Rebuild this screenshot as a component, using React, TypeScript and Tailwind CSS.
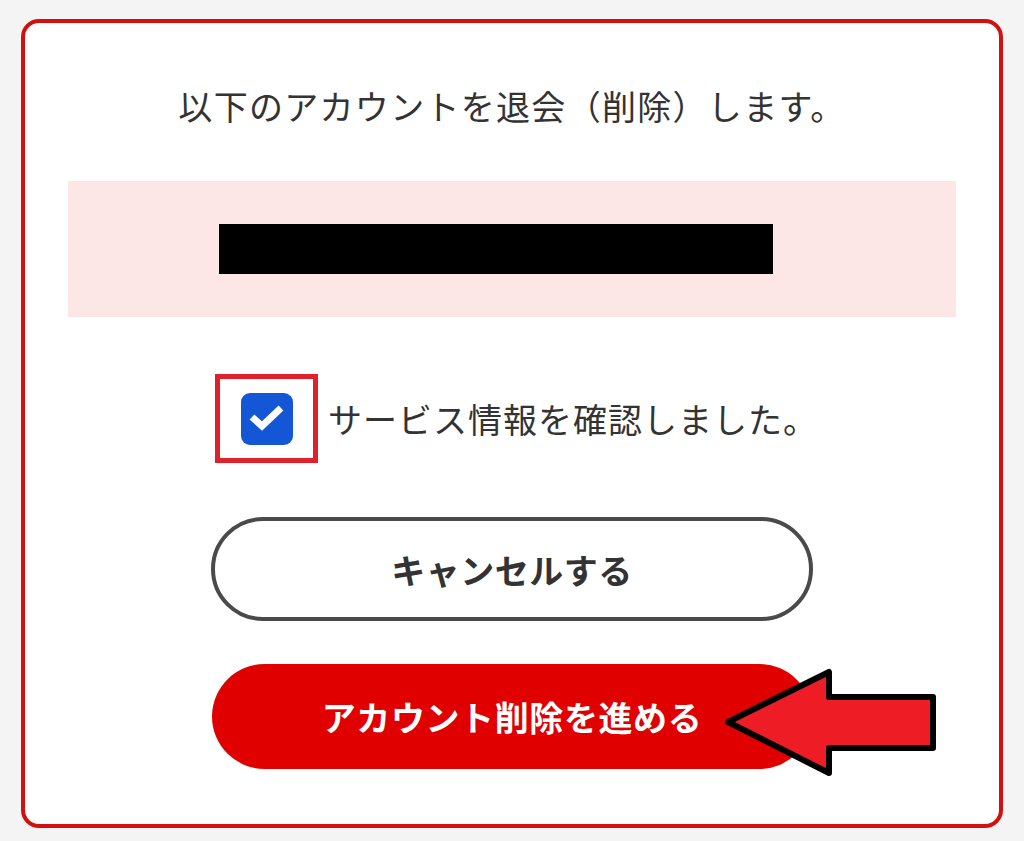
import React from "react";

export default function App() {
  const font = { fontFamily: '"Noto Sans CJK JP", "Noto Sans", sans-serif' };
  return (
    <div className="w-[1024px] h-[841px] bg-[#f4f4f4] pt-[19px] pl-[21px]" style={font}>
      <div className="relative w-[982px] h-[809px] bg-white border-4 border-[#d40f0f] rounded-[18px] flex flex-col items-center pt-[59px]">
        <p className="text-[34px] leading-[48px] text-[#333] tracking-[1.3px]">以下のアカウントを退会（削除）します。</p>
        <div className="mt-[51px] w-[888px] h-[136px] bg-[#fde6e6] flex items-center">
          <div className="ml-[151px] w-[554px] h-[50px] bg-black" />
        </div>
        <div className="mt-[57px] flex items-center gap-[10px] ml-[9px]">
          <div className="w-[103px] h-[89px] border-[5px] border-[#e0212b] flex items-center justify-center">
            <div className="w-[52px] h-[52px] rounded-[9px] bg-[#1457d6] flex items-center justify-center">
              <svg width="52" height="52" viewBox="0 0 52 52">
                <polyline points="11,24 21,33 40,15" fill="none" stroke="white" strokeWidth="7" strokeLinejoin="miter" />
              </svg>
            </div>
          </div>
          <span className="text-[34px] leading-[48px] text-[#333] tracking-[1px]">サービス情報を確認しました。</span>
        </div>
        <button className="mt-[54px] w-[602px] h-[104px] rounded-full border-4 border-[#4a4a4a] bg-white flex items-center justify-center text-[34px] font-bold text-[#333] tracking-[0.5px]">
          キャンセルする
        </button>
        <button className="mt-[43px] w-[600px] h-[105px] rounded-full bg-[#e00000] flex items-center justify-center text-[34px] font-bold text-white tracking-[0.6px]">
          アカウント削除を進める
        </button>
        <svg className="absolute left-[670px] top-[621px]" width="260" height="150" viewBox="0 0 260 150">
          <polygon
            points="33,78 134,28 134,53 238,53 238,104 134,104 134,129"
            fill="#ee1c25"
            stroke="black"
            strokeWidth="6"
            strokeLinejoin="round"
          />
        </svg>
      </div>
    </div>
  );
}
